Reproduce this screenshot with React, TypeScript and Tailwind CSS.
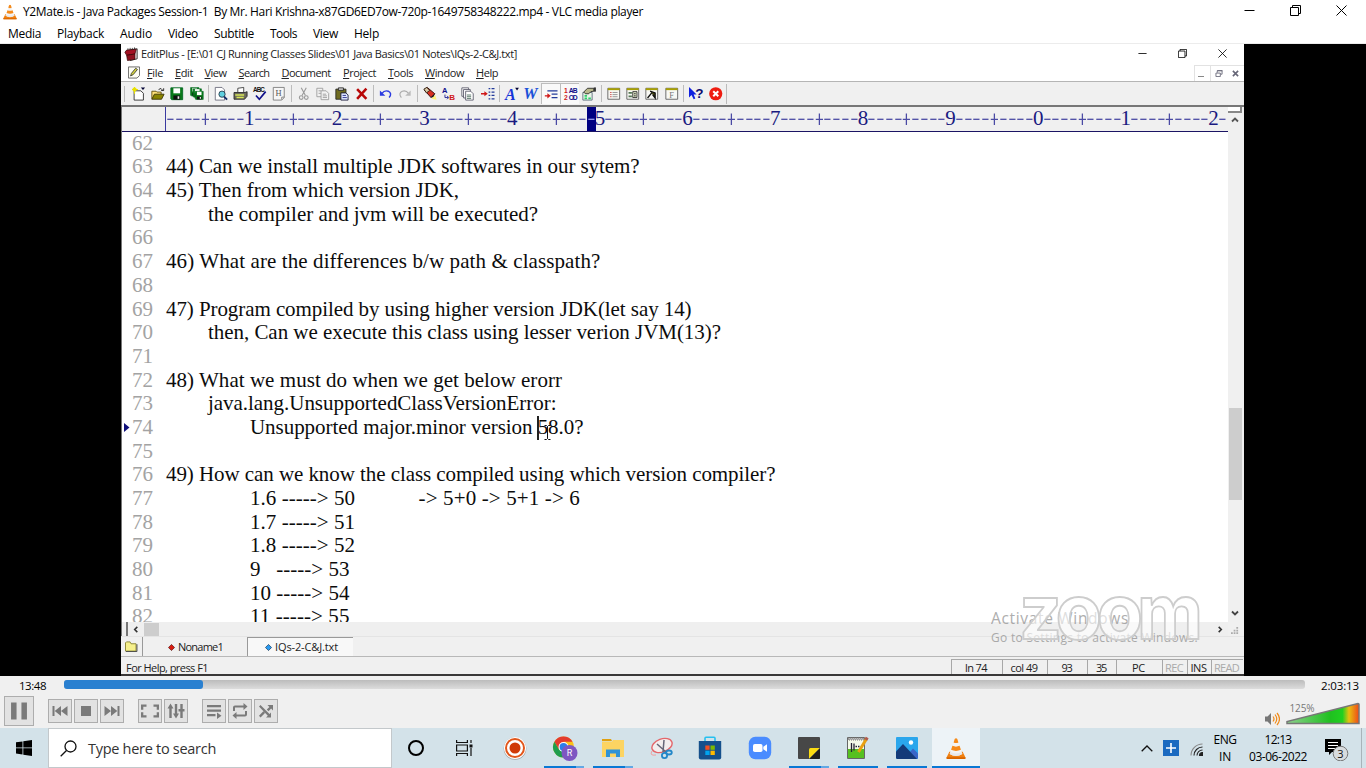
import React, { useLayoutEffect, useRef } from "react";

const UI = "font-['Open_Sans','Noto_Sans',sans-serif]";

/* A single line of text whose tracking is adjusted so that it fills a given width. */
function Fit({ w, className = "", children }: { w: number; className?: string; children: React.ReactNode }) {
  const ref = useRef<HTMLSpanElement>(null);
  useLayoutEffect(() => {
    const el = ref.current;
    if (!el) return;
    el.style.letterSpacing = "0px";
    const natural = el.getBoundingClientRect().width;
    const n = (el.textContent || "").length;
    el.style.letterSpacing = `${(w - natural) / n}px`;
  }, [w]);
  return (
    <span ref={ref} className={`inline-block whitespace-pre shrink-0 ${className}`}>
      {children}
    </span>
  );
}

function Cone({ className }: { className: string }) {
  return (
    <svg viewBox="0 0 24 26" className={className}>
      <path d="M4 17h16l3.500 7.200q.3 1.300-1 1.300h-21q-1.300 0-1-1.300z" fill="#f08010" />
      <path d="M1 23.500h22l.5 1q0 1-1 1h-21q-1 0-1-1z" fill="#d86400" />
      <path d="M10.400 1.500q1.600-1.600 3.200 0l6 18q-7.600 4.500-15.200 0z" fill="#f4f4f4" />
      <path d="M10.400 1.500q1.600-1.600 3.200 0l1.300 4.200q-2.900 1.400-5.800 0z" fill="#f58a1a" />
      <path d="M7.700 9.800q4.300 2 8.600 0l1.600 4.700q-5.900 2.800-11.800 0z" fill="#f58a1a" />
      <path d="M5.200 17.300q6.800 3.200 13.600 0l.8 2.300q-7.600 4.500-15.200 0z" fill="#e8e8ea" />
    </svg>
  );
}

function WindowButtons({ className, gap }: { className: string; gap: string }) {
  return (
    <div className={`flex items-center ${gap}`}>
      <svg viewBox="0 0 11 11" className={className} fill="none" stroke="#000"><path d="M.5 5.500h10" /></svg>
      <svg viewBox="0 0 11 11" className={className} fill="none" stroke="#000"><path d="M.5 2.500h8v8h-8zM2.500 2.500v-2h8v8h-2" /></svg>
      <svg viewBox="0 0 11 11" className={className} fill="none" stroke="#000"><path d="M.5.5l10 10M10.500.5l-10 10" /></svg>
    </div>
  );
}

const floppy = (
  <g>
    <path d="M1 1h14v14H2l-1-1z" fill="#0a7a1a" stroke="#062" />
    <path d="M4 1.500h8v6H4z" fill="#fff" />
    <path d="M4 10h8v5H4z" fill="#111" />
    <path d="M9 11h2v3H9z" fill="#eee" />
  </g>
);
const panel = (
  <g>
    <path d="M1 1.500h14v13H1z" fill="#f8f8f4" stroke="#555" />
    <path d="M1 1.500h14v2.200H1z" fill="#a8a000" />
  </g>
);

const tools: (React.ReactNode | "sep")[] = [
  <g><path d="M2.500 4.500h8l3 3v8h-11z" fill="#fff" stroke="#222" /><path d="M3 0v8M0 3h7M1 1l4 4M5 1L1 5" stroke="#e8e000" strokeWidth="1.300" /><path d="M10.500.5h5l-2.500 3z" fill="#003" /></g>,
  <g><path d="M1 14V5h5l1 1h5v3" fill="#ffe27a" stroke="#554400" /><path d="M1 14.500l3-6h11.500l-3 6z" fill="#8a8400" stroke="#332e00" /><path d="M9 3q3-3 5 1M12 4.200h3V1.500" fill="none" stroke="#111" /></g>,
  floppy,
  <g><g transform="scale(.7)">{floppy}</g><g transform="translate(3 1.500) scale(.7)">{floppy}</g><g transform="translate(5.500 4.500) scale(.68)">{floppy}</g></g>,
  "sep",
  <g><path d="M1.500.5h8l3 3v12h-11z" fill="#fff" stroke="#667" /><circle cx="9.500" cy="8.500" r="3.700" fill="#5fd0e0" stroke="#234" /><path d="M12 11.500l3.500 3.500" stroke="#112a66" strokeWidth="2.200" /></g>,
  <g><path d="M4.500 6V1.500l7-1V6" fill="#fff" stroke="#333" /><path d="M0 6.500h13l2.500-1v5.500l-3 3.500H0z" fill="#6c6a5a" stroke="#222" /><path d="M1.500 9.500H12M3 12.500h8.500" stroke="#d8e858" strokeWidth="1.600" /></g>,
  <g><text x="0" y="6.500" fontSize="7.500" fontWeight="700" fill="#111" className="font-['Liberation_Sans',sans-serif]" textLength="14">ABC</text><path d="M3.500 10l4 4.500L15 5.500" fill="none" stroke="#11118a" strokeWidth="2" /></g>,
  <g><path d="M1.500.5h13v12l-3 3h-10z" fill="#f6f6f6" stroke="#777" /><path d="M11.500 15v-3h3" fill="none" stroke="#777" /><text x="4" y="11" fontSize="10" fill="#555" className="font-['Liberation_Serif',serif]">H</text></g>,
  "sep",
  <g fill="none" stroke="#999" strokeWidth="1.300"><path d="M5 1l5 9M11 1l-5 9" /><circle cx="5" cy="12.500" r="2.200" /><circle cx="11" cy="12.500" r="2.200" /></g>,
  <g fill="#f2f2f2" stroke="#999"><path d="M1 1.500h7v10H1z" /><path d="M6 4.500h6l3 3v7.500H6z" /><path d="M3 4.500h3M3 7.500h3M8 8.500h4M8 10.500h5M8 12.500h5" /></g>,
  <g><path d="M1 2.500h12v12H1z" fill="#6f6b20" stroke="#222" /><path d="M4 1h6v3H4z" fill="#ccc" stroke="#222" /><path d="M7 7h6l2.500 2.500v6H7z" fill="#dfe8ff" stroke="#113" /><path d="M9 10h4M9 12.500h5" stroke="#228" /></g>,
  <path d="M2.500 2.500l11 11.500M13.500 2L2.500 14" stroke="#b80808" strokeWidth="3" fill="none" />,
  "sep",
  <g><path d="M3.500 7.500q3-4 7.500-2.500 5 2.500 1 7.500" fill="none" stroke="#2a3ae0" strokeWidth="1.700" /><path d="M1 4v6.500h6.500z" fill="#2a3ae0" /></g>,
  <g><path d="M12.500 7.500q-3-4-7.500-2.500-5 2.500-1 7.500" fill="none" stroke="#aaa" strokeWidth="1.300" /><path d="M15 4v6.500H8.500z" fill="#bbb" /></g>,
  "sep",
  <g><path d="M1.500 3.500l8 9 4.500-4.500-9-7.500z" fill="#d83020" stroke="#220000" /><path d="M1 2.500L4.500.5 8 4 4 7z" fill="#d8c8a8" stroke="#221100" /><path d="M9 12.500L14 8l-1.500 4z" fill="#111" /><path d="M10 14l4.500-4.500L16 15z" fill="#fff27a" /></g>,
  <g className="font-['Liberation_Sans',sans-serif]" fontWeight="700"><text x="0" y="7.500" fontSize="9" fill="#11118a">A</text><text x="8.500" y="15.500" fontSize="9.500" fill="#d01818">B</text><path d="M3.500 9v3.500h4M6 10.500l2 2-2 2" fill="none" stroke="#11118a" /></g>,
  <g fill="#fff" stroke="#556"><path d="M1 1h8v10H1z" /><path d="M3 3h8v10H3z" /><path d="M5.500 5h6l3 3v7.500h-9z" /><path d="M7 9.500h5M7 11.500h5M7 13.500h5" stroke="#465" /></g>,
  <g fill="none"><path d="M0 8h5" stroke="#d01818" strokeWidth="1.800" /><path d="M4 5l4 3-4 3z" fill="#d01818" /><path d="M9 2h2M12.500 2H16M9 6h2M12.500 6H16M9 10h2M12.500 10H16M9 14h2M12.500 14H16" stroke="#223a9a" strokeWidth="1.500" /></g>,
  "sep",
  <g><text x="0" y="15" fontSize="19" fontWeight="700" fontStyle="italic" fill="#1634d8" className="font-['Liberation_Serif',serif]">A</text><path d="M12 1h4.500l-2.200 3z" fill="#003" /></g>,
  <text x="-1" y="14.500" fontSize="19" fontWeight="700" fontStyle="italic" fill="#1b50d8" textLength="17" lengthAdjust="spacingAndGlyphs" className="font-['Liberation_Serif',serif]">W</text>,
  <g fill="none"><path d="M4 4.500h12M9 8.500h7M9 12.500h7" stroke="#223a9a" strokeWidth="1.500" /><path d="M1 10.500h4" stroke="#d01818" strokeWidth="1.500" /><path d="M4 7.500l4 3-4 3z" fill="#d01818" /></g>,
  <g className="font-['Liberation_Sans',sans-serif]" fontWeight="700" fontSize="8"><text x="0" y="7.200" fill="#d01818">1</text><text x="5.500" y="7.200" fill="#11118a" textLength="10.500">AB</text><text x="0" y="15.500" fill="#d01818">2</text><text x="5.500" y="15.500" fill="#11118a" textLength="10.500">OD</text></g>,
  <g><path d="M1 6.500h11v9H1z" fill="#e8f4e8" stroke="#567" /><path d="M3 9.500h3v2H3zM3 12.500h3v2H3zM7.500 12.500h3v2h-3z" fill="#2fd06a" /><path d="M2 6l4.500-4.500h7.500V5l-3.500.5L8 8H4z" fill="#b8b88c" stroke="#222" /><path d="M14 .5h2.500v5H14z" fill="#333" /></g>,
  "sep",
  <g>{panel}<path d="M3.500 6.500h2M3.500 9h2M3.500 11.500h2" stroke="#c44" /><path d="M6.500 6.500h6M6.500 9h6M6.500 11.500h6" stroke="#888" /></g>,
  <g>{panel}<path d="M3 6h4v2H3zM3 10h4v2H3z" fill="#575" /><path d="M8 5.500h5v7H8z" fill="#dfe6c8" stroke="#222" /><path d="M9.500 8h2M9.500 10.500h2" stroke="#111" /></g>,
  <g>{panel}<path d="M3 13l5-6M6 5l6 2v6l-3-4" fill="#4a4a10" stroke="#111" strokeWidth="1.600" /></g>,
  <g>{panel}<text x="5" y="13" fontSize="10" fill="#777" className="font-['Liberation_Serif',serif]">F</text></g>,
  "sep",
  <g><path d="M0 0v12.500l3-3 2.500 5 2-1L5.500 9H9z" fill="#1020e0" /><text x="7.500" y="13" fontSize="16" fontWeight="700" fill="#0a0a70" className="font-['Liberation_Sans',sans-serif]">?</text></g>,
  <g><circle cx="8" cy="8" r="7.800" fill="#ee1c10" /><path d="M5 5l6 6M11 5l-6 6" stroke="#fff" strokeWidth="2.400" /></g>,
];

/* line number, tab depth, text and width, optional trailing column */
const lines: { n: number; depth?: number; t?: string; w?: number; more?: [string, number] }[] = [
  { n: 62 },
  { n: 63, t: "44) Can we install multiple JDK softwares in our sytem?", w: 473.5 },
  { n: 64, t: "45) Then from which version JDK,", w: 293 },
  { n: 65, depth: 1, t: "the compiler and jvm will be executed?", w: 330 },
  { n: 66 },
  { n: 67, t: "46) What are the differences b/w path & classpath?", w: 434.5 },
  { n: 68 },
  { n: 69, t: "47) Program compiled by using higher version JDK(let say 14)", w: 525.5 },
  { n: 70, depth: 1, t: "then, Can we execute this class using lesser verion JVM(13)?", w: 513 },
  { n: 71 },
  { n: 72, t: "48) What we must do when we get below erorr", w: 396 },
  { n: 73, depth: 1, t: "java.lang.UnsupportedClassVersionError:", w: 348.5 },
  { n: 74, depth: 2, t: "Unsupported major.minor version 58.0?", w: 333.5 },
  { n: 75 },
  { n: 76, t: "49) How can we know the class compiled using which version compiler?", w: 609.5 },
  { n: 77, depth: 2, t: "1.6 -----> 50", w: 105, more: ["-> 5+0 -> 5+1 -> 6", 161.5] },
  { n: 78, depth: 2, t: "1.7 -----> 51", w: 105 },
  { n: 79, depth: 2, t: "1.8 -----> 52", w: 105 },
  { n: 80, depth: 2, t: "9   -----> 53", w: 99.5 },
  { n: 81, depth: 2, t: "10 -----> 54", w: 99.5 },
  { n: 82, depth: 2, t: "11 -----> 55", w: 99.5 },
];
const indent = ["", "ml-[42px]", "ml-[84px]"];

const ruler = Array.from({ length: 121 }, (_, i) =>
  i % 10 === 9 ? String(((i + 1) / 10) % 10) : i % 10 === 4 ? "+" : "-"
);

const vlcMenu: [string, number, string][] = [
  ["Media", 33, "w-[49px]"], ["Playback", 47, "w-[63px]"], ["Audio", 32, "w-[48px]"], ["Video", 30, "w-[46px]"],
  ["Subtitle", 40, "w-[56px]"], ["Tools", 27, "w-[43px]"], ["View", 25, "w-[41px]"], ["Help", 25, "w-[30px]"],
];
const editMenu: [string, number, string][] = [
  ["File", 16, "w-[28px]"], ["Edit", 18, "w-[29.500px]"], ["View", 22, "w-[34px]"], ["Search", 31, "w-[43px]"],
  ["Document", 49, "w-[61.500px]"], ["Project", 33, "w-[45px]"], ["Tools", 25, "w-[37px]"], ["Window", 39, "w-[51px]"], ["Help", 22, "w-[30px]"],
];

function EditPlus() {
  return (
    <div className={`flex h-[632px] w-[1123px] shrink-0 flex-col overflow-hidden bg-[#f0f0f0] text-[11px] text-[#222] ${UI}`}>
      <div className="flex h-[20px] shrink-0 items-center bg-white pl-[3px] pr-[17.500px]">
        <svg viewBox="0 0 16 16" className="mr-[3px] h-[14px] w-[14px]">
          <path d="M6 3.500L15 2v11.500L7 15.500z" fill="#f2e8e8" stroke="#222" />
          <path d="M1 6l2-2.500 11-1L12.500 8 3 9.500z" fill="#a31224" stroke="#300" strokeWidth=".8" />
          <path d="M3 9.500L12.500 8v6L4 15.500z" fill="#8f1220" stroke="#300" strokeWidth=".8" />
          <path d="M4.500 1.500v2M7 1v2M9.500 1v2M12 .5v2" stroke="#333" />
        </svg>
        <Fit w={376}>{"EditPlus - [E:\\01 CJ Running Classes Slides\\01 Java Basics\\01 Notes\\IQs-2-C&J.txt]"}</Fit>
        <div className="ml-auto"><WindowButtons className="mt-[-2px] h-[9px] w-[9px]" gap="gap-[31px]" /></div>
      </div>
      <div className="flex h-[17px] shrink-0 items-center bg-white pl-[7px]">
        <svg viewBox="0 0 14 14" className="mr-[7px] h-[13px] w-[12px]">
          <path d="M.5.5h13v10l-3 3H.5z" fill="#fdfdf4" stroke="#555" />
          <path d="M3 11l1-3 5-6 2 1.500-5 6z" fill="#d8d840" stroke="#333" />
        </svg>
        {editMenu.map(([t, w, box]) => (
          <div key={t} className={`${box} shrink-0 leading-[14px]`}>
            <Fit w={w}><span className="underline underline-offset-1">{t[0]}</span>{t.slice(1)}</Fit>
          </div>
        ))}
        <div className="ml-auto flex h-full items-end text-[#777]">
          <div className="flex h-[16px] w-[16px] items-end border-l border-t border-[#e2e2e2] pb-[4px] pl-[3px]"><div className="h-[1.500px] w-[6px] bg-[#888]" /></div>
          <div className="flex h-[16px] w-[17px] items-center justify-center border-l border-t border-[#e2e2e2]">
            <svg viewBox="0 0 8 8" className="h-[7px] w-[8px]" fill="none" stroke="#667"><path d="M2 3V.8h5.500v4H6M.5 3.500h5v4h-5zM2 .8h6" /></svg>
          </div>
          <div className="flex h-[16px] w-[17px] items-center justify-center border-t border-[#e2e2e2]">
            <svg viewBox="0 0 8 8" className="h-[7px] w-[7px]" fill="none" stroke="#667" strokeWidth="1.800"><path d="M1 1l6 6M7 1L1 7" /></svg>
          </div>
        </div>
      </div>
      <div className="flex h-[24px] shrink-0 items-center border-t border-[#b5b5b5] pl-[3px]">
        <div className="mr-[4px] h-[16px] w-px bg-[#bbb]" />
        {tools.map((t, i) =>
          t === "sep" ? (
            <div key={i} className="flex h-full w-[5.200px] shrink-0 items-center justify-center"><div className="h-[17px] w-px bg-[#bcbcbc]" /></div>
          ) : (
            <div key={i} className={`flex w-[19.300px] shrink-0 items-center justify-center ${i === 25 || i === 26 ? "h-[21px] border-l border-t border-[#bdbdbd] bg-[#f9f9f9]" : "h-[19px]"}`}>
              <svg viewBox="0 0 16 16" className="h-[13.500px] w-[13.500px] overflow-visible">{t}</svg>
            </div>
          )
        )}
        <div className="ml-[1px] h-[20px] w-px bg-[#bbb]" />
      </div>
      <div className="flex h-[531px] shrink-0 border-l border-t-[2px] border-[#777]">
        <div className="flex w-[1106px] shrink-0 flex-col">
          <div className="flex h-[25px] shrink-0 border-b border-[#1b1464] font-['Liberation_Serif',serif] text-[21px] leading-[22px] text-[#1a1a80]">
            <div className="w-[44px] shrink-0 border-r border-[#3a3aa0]" />
            <div className="flex overflow-hidden">
              {ruler.map((c, i) => (
                <div key={i} className={`flex w-[8.777px] shrink-0 justify-center ${i === 48 ? "bg-[#000080]" : ""}`}>
                  {c === "-" || c === "+" ? (
                    <svg viewBox="0 0 9 24" preserveAspectRatio="none" className="h-[24px] w-[8.777px]" stroke={i === 48 ? "#9a9ae8" : "#4a4aa4"} strokeWidth="1.300" fill="none">
                      <path d={c === "+" ? "M.8 12.300h7.400M4.500 6.500v11.500" : "M1.300 12.300h6.400"} />
                    </svg>
                  ) : c}
                </div>
              ))}
            </div>
          </div>
          <div className="h-[490px] shrink-0 overflow-hidden bg-white font-['Liberation_Serif',serif] text-[21px] leading-[23.700px]">
            <div className="mt-[-0.300px]">
              {lines.map(({ n, depth = 0, t, w = 0, more }) => (
                <div key={n} className="relative flex h-[23.700px] pl-[10px]">
                  <span className="w-[34px] shrink-0 text-[#a3a3a3]">{n}</span>
                  {t && <Fit w={w} className={`text-[#0c0c0c] ${indent[depth]}`}>{t}</Fit>}
                  {more && <Fit w={more[1]} className="ml-[63.500px] text-[#0c0c0c]">{more[0]}</Fit>}
                  {n === 74 && (
                    <>
                      <svg viewBox="0 0 6 9" className="absolute left-[2px] top-[7px] h-[9px] w-[6px]"><path d="M0 0l5.500 4.500L0 9z" fill="#10107a" /></svg>
                      <div className="absolute left-[415px] top-[0px] h-[24px] w-[2px] bg-[#222]" />
                      <svg viewBox="0 0 7 15" className="absolute left-[422px] top-[9px] h-[15px] w-[7px]" fill="none" stroke="#111"><path d="M.5.5h2l1 1 1-1h2M3.500 1.500v12M.5 14.500h2l1-1 1 1h2" /></svg>
                    </>
                  )}
                </div>
              ))}
            </div>
          </div>
          <div className="flex h-[14px] shrink-0 items-center bg-[#efefef]">
            <div className="h-full w-[6px] border-r-[2px] border-[#777]" />
            <svg viewBox="0 0 8 8" className="ml-[4px] h-[7px] w-[8px]" fill="none" stroke="#333" strokeWidth="1.800"><path d="M5.500 1l-3 3 3 3" /></svg>
            <div className="ml-[4px] h-[13px] w-[15px] bg-[#cdcdcd]" />
            <svg viewBox="0 0 8 8" className="ml-auto mr-[4px] h-[7px] w-[8px]" fill="none" stroke="#333" strokeWidth="1.800"><path d="M2.500 1l3 3-3 3" /></svg>
          </div>
        </div>
        <div className="flex w-[14px] shrink-0 flex-col items-center bg-[#f0f0f0]">
          <div className="h-[6px] w-full border-b-2 border-r-2 border-[#888] bg-white" />
          <svg viewBox="0 0 8 8" className="mt-[3px] h-[8px] w-[8px]" fill="none" stroke="#555" strokeWidth="1.800"><path d="M1 5.500l3-3 3 3" /></svg>
          <div className="mt-[284px] h-[92px] w-[13px] bg-[#cdcdcd]" />
          <svg viewBox="0 0 8 8" className="mt-[109px] h-[8px] w-[8px]" fill="none" stroke="#444" strokeWidth="1.800"><path d="M1 2.500l3 3 3-3" /></svg>
          <svg viewBox="0 0 9 9" className="mt-[10px] h-[8px] w-[8px]" fill="#aaa"><path d="M6 0h2v2H6zM3 3h2v2H3zM6 3h2v2H6zM0 6h2v2H0zM3 6h2v2H3zM6 6h2v2H6z" /></svg>
        </div>
      </div>
      <div className="flex h-[20px] shrink-0 items-stretch border-t border-[#e4e4e4]">
        <div className="flex w-[22px] items-center border-r border-[#999] pl-[3px]">
          <svg viewBox="0 0 14 12" className="h-[11px] w-[14px]"><path d="M1 11V2l1-1h4l1 2h5.500v8z" fill="#f6f08c" stroke="#8a8430" /><path d="M1.500 11.500h12v-8" fill="none" stroke="#444" /></svg>
        </div>
        <div className="flex w-[104px] items-center pl-[25px] pt-px">
          <svg viewBox="0 0 8 8" className="mr-[3px] h-[7px] w-[7px]"><path d="M4 .5L7.500 4 4 7.500.5 4z" fill="#d81c10" stroke="#400" strokeWidth=".7" /></svg>
          <Fit w={45}>Noname1</Fit>
        </div>
        <div className="flex w-[106px] items-center border-l border-t border-[#999] bg-[#f8f8f8] pl-[17px]">
          <svg viewBox="0 0 8 8" className="mr-[3px] h-[7px] w-[7px]"><path d="M4 .5L7.500 4 4 7.500.5 4z" fill="#2a9af0" stroke="#024" strokeWidth=".7" /></svg>
          <Fit w={63}>{"IQs-2-C&J.txt"}</Fit>
        </div>
      </div>
      <div className="mt-auto flex h-[20px] shrink-0 items-stretch border-b-2 border-b-[#3a3838] border-t border-t-[#b8b8b8] pl-[5px]">
        <div className="flex w-[825px] items-center pt-[5px]"><Fit w={82}>For Help, press F1</Fit></div>
        {(
          [
            ["ln 74", 22, "w-[51px]", ""], ["col 49", 27, "w-[45px]", ""], ["93", 10, "w-[40px]", ""], ["35", 10, "w-[29px]", ""],
            ["PC", 13, "w-[46px]", ""], ["REC", 18, "w-[25px]", "text-[#aaa]"], ["INS", 16, "w-[24px]", ""], ["READ", 25, "w-[32px]", "text-[#aaa]"],
          ] as [string, number, string, string][]
        ).map(([t, w, box, c]) => (
          <div key={t} className={`mt-[2px] flex shrink-0 items-center justify-center border-l border-t border-[#a8a8a8] pr-[2px] pt-[2px] ${box} ${c}`}>
            <Fit w={w}>{t}</Fit>
          </div>
        ))}
      </div>
    </div>
  );
}

function CtlButton({ big, gap = "", children }: { big?: boolean; gap?: string; children: React.ReactNode }) {
  return (
    <div className={`flex shrink-0 items-center justify-center border border-[#adadad] bg-[#e2e2e2] ${big ? "h-[30px] w-[30px]" : "h-[24px] w-[24px]"} ${gap}`}>
      <svg viewBox="0 0 18 18" className={big ? "h-[22px] w-[22px]" : "h-[18px] w-[18px]"} fill="#7a7a7a">{children}</svg>
    </div>
  );
}

function Slot({ bar = "", active, children }: { bar?: "" | "one" | "two"; active?: boolean; children: React.ReactNode }) {
  return (
    <div className="flex h-full w-[49px] shrink-0 justify-center">
      <div className={`flex h-full flex-col items-center justify-between ${active ? "w-[48px] bg-[#edf3f7]" : "w-[40px]"}`}>
        <div className="flex h-[38px] items-center pt-[2px]">{children}</div>
        <div className="flex h-[2px] w-full">
          {bar && <div className="flex-1 bg-[#0a78d4]" />}
          {bar === "two" && <div className="w-[8px] bg-[#62a8e4]" />}
        </div>
      </div>
    </div>
  );
}

function Taskbar() {
  return (
    <div className="flex h-[40px] w-full shrink-0 bg-[#d3e2e9]">
      <div className="flex w-[48px] shrink-0 items-center justify-center">
        <svg viewBox="0 0 16 16" className="h-[16px] w-[16px]"><path d="M0 2.300l6.500-.9v6.100H0zM7.300 1.300L16 0v7.500H7.300zM0 8.300h6.500v6.200L0 13.600zM7.300 8.300H16V16l-8.700-1.300z" /></svg>
      </div>
      <div className="flex w-[344px] shrink-0 items-center border border-[#c3c8cb] bg-white pl-[11px]">
        <svg viewBox="0 0 17 17" className="h-[17px] w-[17px]" fill="none" stroke="#111" strokeWidth="1.300"><circle cx="10.500" cy="6.500" r="5.500" /><path d="M6.500 10.500L.7 16.300" /></svg>
        <Fit w={128} className="ml-[11px] pt-px text-[14.500px] text-[#333]">Type here to search</Fit>
      </div>
      <div className="flex w-[48px] shrink-0 items-center justify-center"><div className="h-[16px] w-[16px] rounded-full border-[2.500px] border-black" /></div>
      <div className="mr-[2px] flex w-[48px] shrink-0 items-center justify-center">
        <svg viewBox="0 0 17 16" className="h-[16px] w-[17px]" fill="none" stroke="#111" strokeWidth="1.200"><path d="M.6 0v2.500h10.800V0M.6 5h10.800v6H.6zM.6 16v-2.500h10.800V16M15 0v3M15 8v8" /><path d="M13.500 4.500h3v3h-3z" fill="#111" stroke="none" /></svg>
      </div>
      <Slot>
        <svg viewBox="0 0 24 24" className="h-[24px] w-[24px]"><circle cx="12" cy="12.500" r="11.300" fill="#777" opacity=".6" /><circle cx="12" cy="12" r="11" fill="#fff" /><circle cx="12" cy="12" r="9" fill="none" stroke="#e2571c" strokeWidth="2" /><circle cx="12" cy="12" r="5.500" fill="#d03a08" /></svg>
      </Slot>
      <Slot bar="two">
        <svg viewBox="0 0 26 26" className="ml-[2px] h-[26px] w-[26px] overflow-visible">
          <circle cx="11.500" cy="12" r="10.500" fill="#fbc116" />
          <path d="M2.400 6.750a10.500 10.500 0 0 1 18.200 0h-9.100v5.250l-4.500 2.600z" fill="#e33b2e" />
          <path d="M2.400 6.750a10.500 10.500 0 0 0 9.100 15.750l4.600-7.900-9.100 0z" fill="#1f9d4d" />
          <circle cx="11.500" cy="12" r="5" fill="#fff" /><circle cx="11.500" cy="12" r="3.900" fill="#2d7de9" />
          <circle cx="17.500" cy="18" r="8" fill="#7e57c2" />
          <text x="17.500" y="21.200" fontSize="9" textAnchor="middle" fill="#fff" className="font-['Roboto',sans-serif]">R</text>
        </svg>
      </Slot>
      <Slot bar="two">
        <svg viewBox="0 0 22 19" className="h-[19px] w-[22px]"><path d="M0 0h9l1 2H0z" fill="#e0a010" /><path d="M0 2.500h10l1-1.500h11v17H0z" fill="#fcd462" /><path d="M4 18V10.500h14V18h-4v-3.500H8V18z" fill="#2f93d6" /></svg>
      </Slot>
      <Slot>
        <svg viewBox="0 0 24 23" className="mr-px h-[23px] w-[24px]" fill="none"><ellipse cx="13" cy="8.500" rx="10.500" ry="6.500" fill="#f3eeee" stroke="#e4666a" strokeWidth="1.400" transform="rotate(-20 13 8.500)" /><path d="M3 14q-3 5 4 4" stroke="#f0a0a0" /><path d="M8 7l9 8M15 3l-1 12" stroke="#667" strokeWidth="1.500" /><circle cx="15.500" cy="18.500" r="2.600" stroke="#2387c8" strokeWidth="1.800" /><ellipse cx="20" cy="15.500" rx="2.800" ry="2" stroke="#2387c8" strokeWidth="1.800" /></svg>
      </Slot>
      <Slot>
        <svg viewBox="0 0 24 24" className="mr-px h-[24px] w-[24px]"><path d="M7 6V2.200q0-1 1-1h8q1 0 1 1V6" fill="none" stroke="#26c0f0" strokeWidth="1.600" /><path d="M.8 5h22.400v16.500q0 2-2 2H2.800q-2 0-2-2z" fill="#15508c" /><path d="M7.300 9.500h4.300v4.300H7.300z" fill="#f25022" /><path d="M12.500 9.500h4.300v4.300h-4.300z" fill="#7fba00" /><path d="M7.300 14.700h4.300V19H7.300z" fill="#00a4ef" /><path d="M12.500 14.700h4.300V19h-4.300z" fill="#ffb900" /></svg>
      </Slot>
      <Slot>
        <svg viewBox="0 0 24 24" className="h-[24px] w-[24px]"><rect x=".8" y=".8" width="22.400" height="22.400" rx="6.500" fill="#4a8cff" /><rect x="5" y="8" width="9.500" height="8" rx="1.800" fill="#fff" /><path d="M15.300 10.800L19 8.300v7.400l-3.700-2.500z" fill="#fff" /></svg>
      </Slot>
      <Slot bar="two">
        <svg viewBox="0 0 22 22" className="h-[22px] w-[22px]"><path d="M1 0h20q1 0 1 1v10L11 22H1q-1 0-1-1V1q0-1 1-1z" fill="#474747" /><path d="M11 22V12.500q0-1.500 1.500-1.500H22z" fill="#fbdc12" /><path d="M11 22L22 11v10.500l-.5.5z" fill="#202020" /></svg>
      </Slot>
      <Slot bar="one">
        <svg viewBox="0 0 24 24" className="h-[24px] w-[24px]"><path d="M1.500 1.500h17v21h-17z" fill="#f4faea" stroke="#666" /><path d="M2 13h16v9H2z" fill="#56c020" /><path d="M2 2h16v2H2z" fill="#bbb" strokeDasharray="1 1" stroke="#777" /><path d="M5.500 7v9M8 7.500v7" stroke="#223" strokeWidth="1.300" /><path d="M9.500 10.500H11M12 10.500h1.500" stroke="#223" strokeWidth="1.500" /><path d="M21 2L12.500 16" stroke="#e8a010" strokeWidth="3" /><path d="M21.200 1.500l-1.400 2.300" stroke="#b05a50" strokeWidth="3.200" /></svg>
      </Slot>
      <Slot bar="one">
        <svg viewBox="0 0 22 22" className="h-[22px] w-[22px]"><rect width="22" height="22" rx="1" fill="#2aa6ec" /><path d="M13 16l4-4.500 5 5V21l-1 1h-6z" fill="#3a66c8" /><path d="M0 14.500L7 7l14 15H1l-1-1z" fill="#143a78" /><circle cx="15" cy="5.500" r="2.200" fill="#fff" /></svg>
      </Slot>
      <Slot bar="one" active><Cone className="h-[23px] w-[20px]" /></Slot>
      <div className="ml-auto flex items-center">
        <svg viewBox="0 0 12 7" className="h-[7px] w-[12px]" fill="none" stroke="#111" strokeWidth="1.300"><path d="M.7 6.300L6 1l5.300 5.300" /></svg>
        <svg viewBox="0 0 16 16" className="ml-[10px] h-[16px] w-[16px]"><path d="M0 0h16v16H0z" fill="#1b6ac0" /><path d="M8 3v10M3 8h10" stroke="#fff" strokeWidth="1.600" /></svg>
        <svg viewBox="0 0 13 13" className="ml-[11px] mt-[2px] h-[13px] w-[13px]" fill="none" stroke="#222" strokeWidth="1.100"><path d="M1 12.500A11.500 11.500 0 0 1 12.500 1" stroke="#888" /><path d="M4 12.500A8.500 8.500 0 0 1 12.500 4M7 12.500A5.500 5.500 0 0 1 12.500 7" /><path d="M9.500 12.500a3 3 0 0 1 3-3v3z" fill="#222" /></svg>
        <div className="ml-[7px] flex w-[30px] flex-col items-center text-[12px] leading-[17px] text-black"><Fit w={23}>ENG</Fit><Fit w={12}>IN</Fit></div>
        <div className="ml-[8px] flex w-[60px] flex-col items-center text-[12px] leading-[17px] text-black"><Fit w={27}>12:13</Fit><Fit w={58}>03-06-2022</Fit></div>
        <svg viewBox="0 0 26 26" className="ml-[16px] h-[26px] w-[26px]"><path d="M1 4h16v13h-9l-3 3v-3H1z" fill="#000" /><path d="M4 7.500h10M4 10.500h10M4 13.500h7" stroke="#fff" strokeWidth="1.200" /><circle cx="16.500" cy="18.500" r="7.300" fill="#d8dcde" stroke="#777" /><text x="16.500" y="22.500" fontSize="11" textAnchor="middle" fill="#111" className="font-['Open_Sans',sans-serif]">3</text></svg>
        <div className="ml-[11px] mr-[4px] h-[40px] w-px bg-[#a8b4ba]" />
      </div>
    </div>
  );
}

export default function App() {
  return (
    <div className={`flex h-[768px] w-[1366px] flex-col overflow-hidden bg-white text-black ${UI}`}>
      <div className="flex h-[24px] shrink-0 items-center pl-[3px] pr-[19px] text-[12px]">
        <Cone className="mr-[6px] h-[16px] w-[14px]" />
        <Fit w={620}>{"Y2Mate.is - Java Packages Session-1  By Mr. Hari Krishna-x87GD6ED7ow-720p-1649758348222.mp4 - VLC media player"}</Fit>
        <div className="ml-auto"><WindowButtons className="mt-[-3px] h-[11px] w-[11px]" gap="gap-[35px]" /></div>
      </div>
      <div className="flex h-[20px] shrink-0 items-center border-b border-[#ececec] pl-[8px] text-[12px]">
        {vlcMenu.map(([t, w, box]) => (
          <div key={t} className={`${box} shrink-0`}><Fit w={w}>{t}</Fit></div>
        ))}
      </div>
      <div className="relative flex h-[632px] shrink-0 bg-black pl-[121px]">
        <EditPlus />
        <div className="pointer-events-none absolute left-[991px] top-[565px] text-[#8c8c8c] opacity-70">
          <div className="text-[15.500px] leading-[18px]"><Fit w={138}>Activate Windows</Fit></div>
          <div className="text-[12px] leading-[21px]"><Fit w={207}>Go to Settings to activate Windows.</Fit></div>
        </div>
        <svg viewBox="0 0 190 60" className="pointer-events-none absolute left-[1016px] top-[544px] h-[60px] w-[190px] font-['Inter',sans-serif] font-bold">
          <text y="51" fontSize="76" fill="#ffffff" fillOpacity=".6" stroke="#cdcdcd" strokeWidth="1.800">
            <tspan x="3" textLength="43" lengthAdjust="spacingAndGlyphs">z</tspan>
            <tspan x="39.500">o</tspan>
            <tspan x="80.500">o</tspan>
            <tspan x="121" textLength="66" lengthAdjust="spacingAndGlyphs">m</tspan>
          </text>
        </svg>
      </div>
      <div className="flex h-[52px] shrink-0 flex-col bg-[#f0f0f0]">
        <div className="flex h-[18px] items-center pl-[19px] pt-[1px] text-[11.500px]">
          <Fit w={27}>13:48</Fit>
          <div className="ml-[18px] mt-[-2px] h-[9px] w-[1241px] rounded-[3px] bg-gradient-to-b from-[#bcbcbc] to-[#dcdcdc]"><div className="h-full w-[139px] rounded-[3px] bg-[#2a80d0]" /></div>
          <Fit w={38} className="ml-[16px]">2:03:13</Fit>
        </div>
        <div className="flex h-[34px] items-center pl-[4px]">
          <CtlButton big><path d="M2.500 2H7v14H2.500zM11 2h4.500v14H11z" /></CtlButton>
          <CtlButton gap="ml-[14px]"><path d="M1.500 4h2v10h-2zM10 4v10L3.700 9zM16.500 4v10L10 9z" /></CtlButton>
          <CtlButton gap="ml-[2px]"><path d="M4 4h10v10H4z" /></CtlButton>
          <CtlButton gap="ml-[2px]"><path d="M14.500 4h2v10h-2zM8 4v10l6.300-5zM1.500 4v10L8 9z" /></CtlButton>
          <CtlButton gap="ml-[14px]"><path d="M0 2.500h5.500v2.300H2.300v3H0zM12.500 2.500H18v5.300h-2.300v-3h-3.200zM0 10.200h2.300v3h3.200v2.300H0zM15.700 10.200H18v5.300h-5.500v-2.300h3.200z" /></CtlButton>
          <CtlButton gap="ml-[2px]"><path d="M2.300 6h2.400v10H2.300zM7.800 2h2.400v10H7.800zM13.300 8h2.400v8h-2.400zM3.500 1.500L6.500 6.500H.5zM9 16.500L6 11.500h6zM11.500 7h6v2.400h-6zM13.300 2h2.400v5.200h-2.400z" /></CtlButton>
          <CtlButton gap="ml-[14px]"><path d="M2 3h14v2.300H2zM2 7.500h14v2.300H2zM2 12h8.500v2.300H2zM12 10.500l4.500 3.200-4.500 3.300z" /></CtlButton>
          <CtlButton gap="ml-[2px]"><path d="M2 9V5.500q0-2 2-2h8.500v-2.500l4 3.500-4 3.500V5.500H4V9zM16 9v3.500q0 2-2 2H5.500V17l-4-3.500 4-3.500v2.500H14V9z" /></CtlButton>
          <CtlButton gap="ml-[2px]"><path d="M2 4.500L3.500 3l9 9L14 10.500v5H9l1.800-1.800zM10.500 3h5.500v5.500l-1.900-1.900L11.500 9.200 9.800 7.500l2.600-2.600zM6.300 9.200L8 10.900l-4.500 4.500L2 13.800z" /></CtlButton>
          <svg viewBox="0 0 15 14" className="ml-auto mt-[16px] h-[14px] w-[15px]" fill="none"><path d="M0 4.500h2.500L6 1v12L2.500 9.500H0z" fill="#777" /><path d="M8 4.500q2 2.500 0 5M10 2.500q3.500 4.500 0 9M12 1q5 6 0 12" stroke="#f08a18" strokeWidth="1.200" /></svg>
          <svg viewBox="0 0 74 24" className="ml-[6px] mr-[6px] mt-[5px] h-[24px] w-[74px] overflow-visible">
            <defs><linearGradient id="vol"><stop offset="0" stopColor="#8ed08e" /><stop offset=".6" stopColor="#20c020" /><stop offset=".77" stopColor="#20d020" /><stop offset=".86" stopColor="#e8c010" /><stop offset="1" stopColor="#f04818" /></linearGradient></defs>
            <path d="M1 21.500v-2L72 1.500q1 0 1 1v19z" fill="url(#vol)" stroke="#777" strokeWidth="1.500" />
            <text x="3.500" y="10.300" fontSize="10" fill="#777" textLength="25" className="font-['Open_Sans',sans-serif]">125%</text>
          </svg>
        </div>
      </div>
      <Taskbar />
    </div>
  );
}
